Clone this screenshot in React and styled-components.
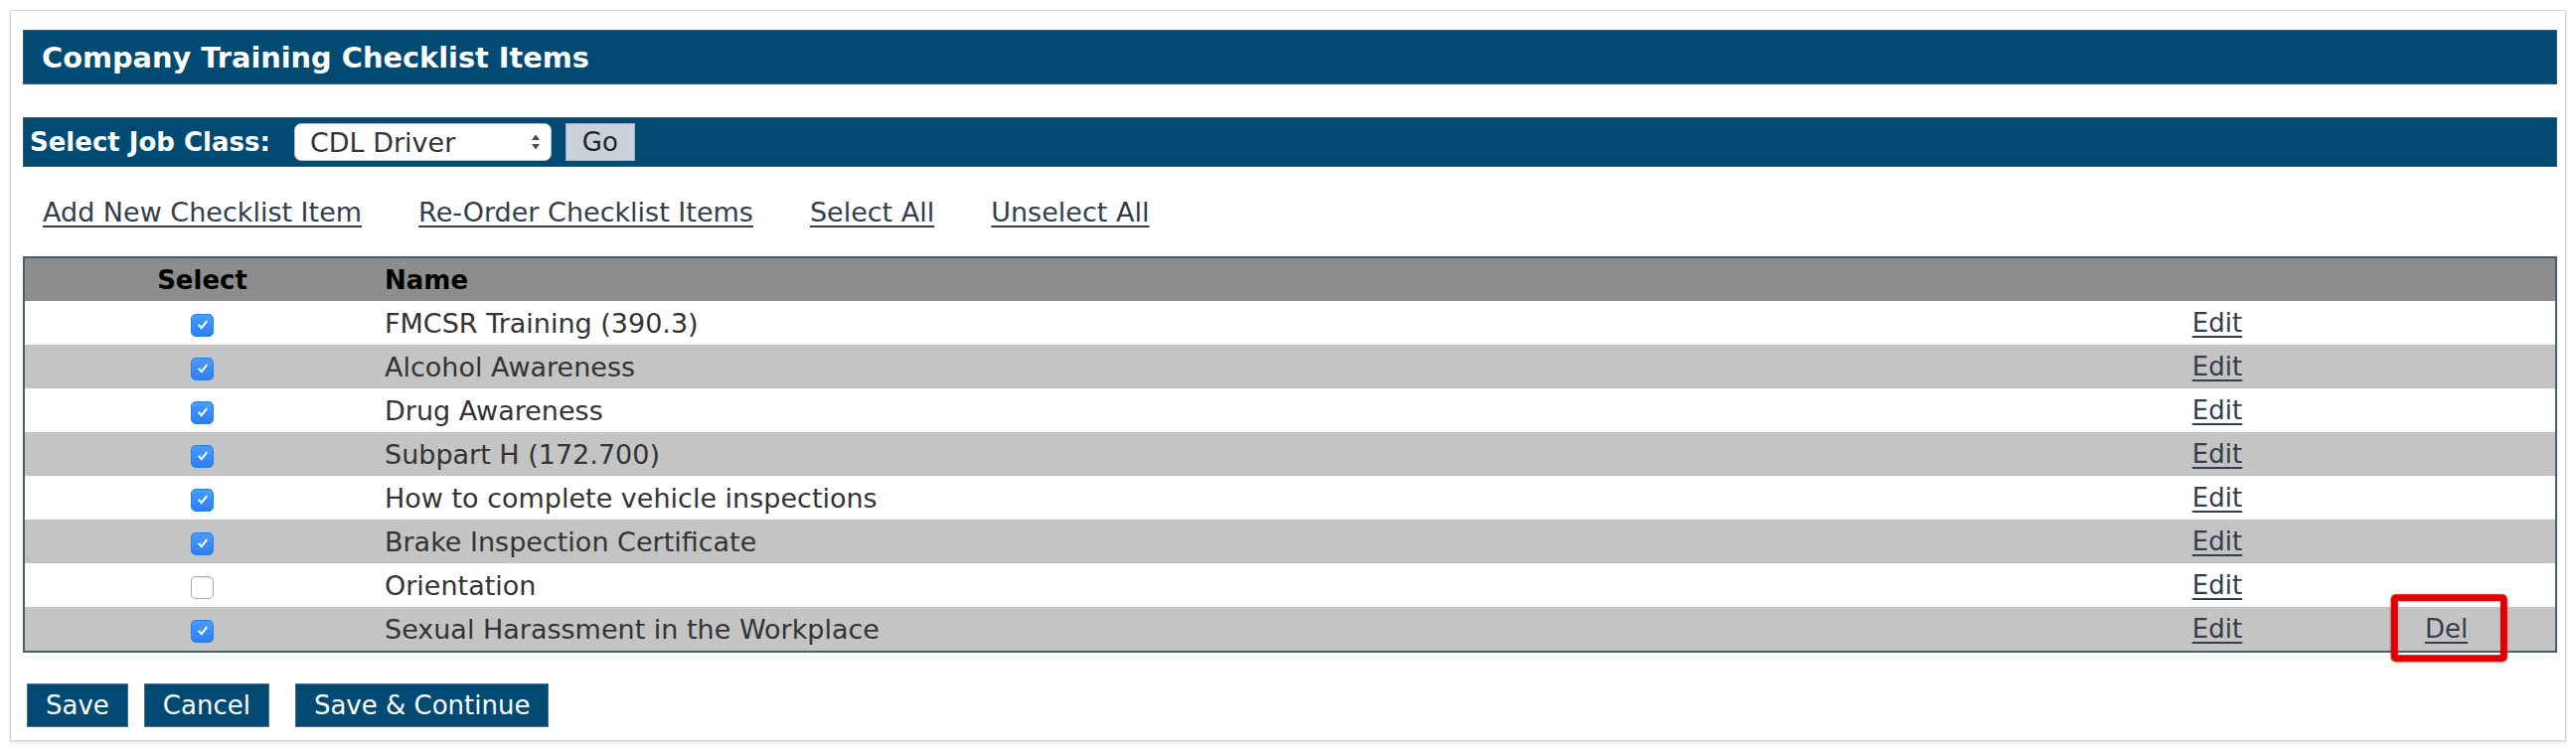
import React from "react";
import styled, { createGlobalStyle } from "styled-components";

const GlobalStyle = createGlobalStyle`
  html, body {
    margin: 0;
    padding: 0;
    background: #ffffff;
  }
  body {
    font-family: "DejaVu Sans", Verdana, sans-serif;
    color: #333333;
  }
`;

const Page = styled.div`
  padding: 10px 10px 6px 10px;
`;

const Panel = styled.section`
  border: 1px solid #d6d6d6;
  box-shadow: 0 1px 3px rgba(0, 0, 0, 0.18);
  background: #ffffff;
  padding: 19px 8px 13px 12px;
`;

const TitleBar = styled.h1`
  margin: 0;
  height: 55px;
  box-sizing: border-box;
  display: flex;
  align-items: center;
  padding-left: 18px;
  background: #004a73;
  border: 1px solid #3d5a74;
  color: #ffffff;
  font-size: 28.8px;
  font-weight: bold;
`;

const FilterBar = styled.div`
  margin-top: 33px;
  height: 50px;
  box-sizing: border-box;
  display: flex;
  align-items: center;
  padding-left: 6px;
  background: #004a73;
  border: 1px solid #3d5a74;
`;

const FilterLabel = styled.label`
  color: #ffffff;
  font-size: 26px;
  font-weight: bold;
  margin-right: 24px;
`;

const SelectBox = styled.div`
  display: flex;
  align-items: center;
  width: 259px;
  height: 38px;
  box-sizing: border-box;
  background: #ffffff;
  border: 1px solid #b9c0c8;
  border-radius: 7px;
  padding: 0 10px 0 15px;
`;

const NativeSelect = styled.select`
  appearance: none;
  -webkit-appearance: none;
  flex: 1;
  border: none;
  background: transparent;
  font-family: "DejaVu Sans", Verdana, sans-serif;
  font-size: 27px;
  color: #333333;
  padding: 0;
  outline: none;
`;

const GoButton = styled.button`
  margin-left: 14px;
  width: 70px;
  height: 38px;
  box-sizing: border-box;
  background: #c9d1dc;
  border: 1px solid #a7b1bd;
  font-family: "DejaVu Sans", Verdana, sans-serif;
  font-size: 26px;
  color: #222222;
  padding: 0;
`;

const LinkRow = styled.nav`
  height: 90px;
  display: flex;
  align-items: center;
  gap: 57px;
  padding-left: 20px;
`;

const TextLink = styled.a`
  color: #333d4b;
  font-size: ${(p) => p.$size || 26}px;
  text-decoration: underline;
  text-decoration-thickness: 2px;
  text-underline-offset: 4px;
  cursor: pointer;
`;

const Grid = styled.table`
  width: 100%;
  border-collapse: collapse;
  border: 2px solid #4b5d72;
  font-size: 26px;
  table-layout: fixed;
`;

const HeadCell = styled.th`
  height: 43px;
  padding: 0 0 0 ${(p) => (p.$align === "left" ? "5px" : "0")};
  background: #8d8d8d;
  color: #000000;
  font-weight: bold;
  text-align: ${(p) => p.$align || "center"};
`;

const Row = styled.tr`
  background: ${(p) => (p.$alt ? "#c4c4c4" : "#ffffff")};
`;

const Cell = styled.td`
  height: 44px;
  padding: 0 0 0 ${(p) => (p.$align === "left" ? "5px" : "0")};
  text-align: ${(p) => p.$align || "center"};
  vertical-align: middle;
  color: #333333;
  font-size: ${(p) => p.$size || 26}px;
`;

const Check = styled.span`
  display: inline-flex;
  align-items: center;
  justify-content: center;
  width: 23px;
  height: 23px;
  box-sizing: border-box;
  border-radius: 5px;
  vertical-align: middle;
  margin-top: 1px;
  background: ${(p) => (p.$on ? "linear-gradient(#4a9bff, #2a7ff2)" : "#ffffff")};
  border: 1px solid ${(p) => (p.$on ? "#2b7be6" : "#a8a8a8")};
  box-shadow: ${(p) => (p.$on ? "none" : "inset 0 1px 1px rgba(0,0,0,0.08)")};
`;

const Marked = styled.span`
  position: relative;
  display: inline-block;
`;

const Highlight = styled.span`
  position: absolute;
  left: 50%;
  top: 50%;
  width: 117px;
  height: 68px;
  box-sizing: border-box;
  transform: translate(-48%, -51%);
  border: 7px solid #e10000;
  border-radius: 5px;
  box-shadow: 0 0 2px rgba(120, 0, 0, 0.35);
  pointer-events: none;
`;

const ActionRow = styled.div`
  display: flex;
  align-items: center;
  margin-top: 31px;
  padding-left: 4px;
`;

const ActionButton = styled.button`
  height: 44px;
  box-sizing: border-box;
  padding: 0 18px;
  margin-left: ${(p) => (p.$gap ? `${p.$gap}px` : "0")};
  background: #004a73;
  border: 1px solid #4f6f8c;
  color: #ffffff;
  font-family: "DejaVu Sans", Verdana, sans-serif;
  font-size: 26px;
`;

const items = [
  { name: "FMCSR Training (390.3)", on: true },
  { name: "Alcohol Awareness", on: true },
  { name: "Drug Awareness", on: true },
  { name: "Subpart H (172.700)", on: true },
  { name: "How to complete vehicle inspections", on: true },
  { name: "Brake Inspection Certificate", on: true },
  { name: "Orientation", on: false },
  { name: "Sexual Harassment in the Workplace", on: true, deletable: true },
];

function CheckMark() {
  return (
    <svg width="12" height="12" viewBox="0 0 12 12">
      <path d="M2.2 6.4 L4.8 9.2 L9.8 2.6" fill="none" stroke="#ffffff" strokeWidth="2" strokeLinecap="round" strokeLinejoin="round" />
    </svg>
  );
}

function Arrows() {
  return (
    <svg width="10" height="18" viewBox="0 0 10 18">
      <path d="M5 1.5 L9 7 H1 Z" fill="#4a4a4a" />
      <path d="M5 16.5 L9 11 H1 Z" fill="#4a4a4a" />
    </svg>
  );
}

export default function App() {
  return (
    <Page>
      <GlobalStyle />
      <Panel>
        <TitleBar>Company Training Checklist Items</TitleBar>
        <FilterBar>
          <FilterLabel>Select Job Class:</FilterLabel>
          <SelectBox>
            <NativeSelect defaultValue="cdl">
              <option value="cdl">CDL Driver</option>
            </NativeSelect>
            <Arrows />
          </SelectBox>
          <GoButton>Go</GoButton>
        </FilterBar>
        <LinkRow>
          <TextLink $size={27}>Add New Checklist Item</TextLink>
          <TextLink $size={27}>Re-Order Checklist Items</TextLink>
          <TextLink $size={27}>Select All</TextLink>
          <TextLink $size={27}>Unselect All</TextLink>
        </LinkRow>
        <Grid>
          <colgroup>
            <col style={{ width: "358px" }} />
            <col />
            <col style={{ width: "242px" }} />
            <col style={{ width: "220px" }} />
          </colgroup>
          <thead>
            <tr>
              <HeadCell>Select</HeadCell>
              <HeadCell $align="left">Name</HeadCell>
              <HeadCell />
              <HeadCell />
            </tr>
          </thead>
          <tbody>
            {items.map((it, i) => (
              <Row key={it.name} $alt={i % 2 === 1}>
                <Cell>
                  <Check $on={it.on}>{it.on && <CheckMark />}</Check>
                </Cell>
                <Cell $align="left" $size={27}>{it.name}</Cell>
                <Cell>
                  <TextLink>Edit</TextLink>
                </Cell>
                <Cell>
                  {it.deletable && (
                    <Marked>
                      <TextLink>Del</TextLink>
                      <Highlight />
                    </Marked>
                  )}
                </Cell>
              </Row>
            ))}
          </tbody>
        </Grid>
        <ActionRow>
          <ActionButton>Save</ActionButton>
          <ActionButton $gap={16}>Cancel</ActionButton>
          <ActionButton $gap={26}>Save &amp; Continue</ActionButton>
        </ActionRow>
      </Panel>
    </Page>
  );
}
